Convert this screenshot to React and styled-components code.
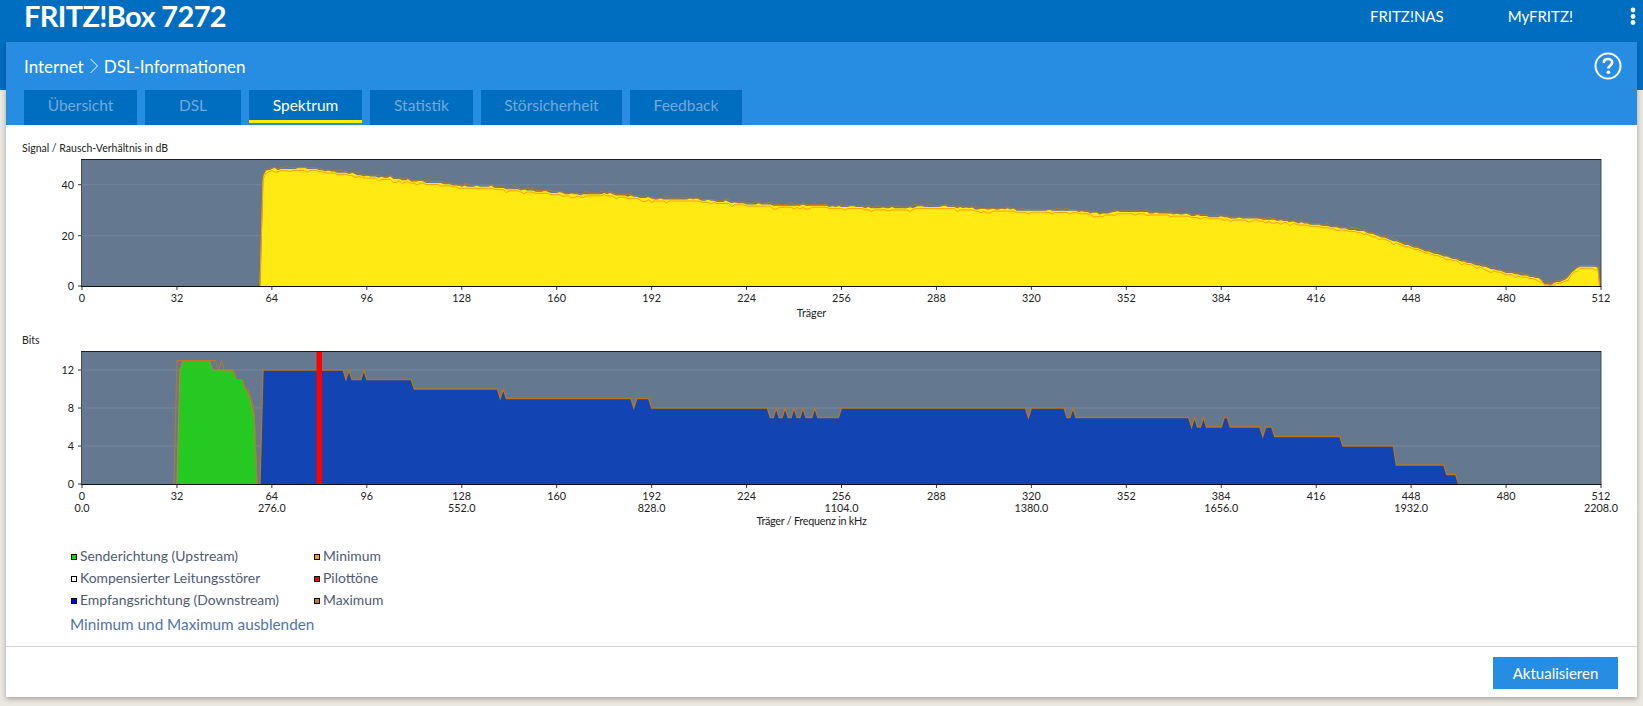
import React from "react";
import styled, { createGlobalStyle } from "styled-components";

const FONT = `Lato, "Liberation Sans", sans-serif`;
const X0 = 82;
const PW = 1519;
const cx = (c) => X0 + (c * PW) / 512;

const Global = createGlobalStyle`
  html, body { margin: 0; padding: 0; background: #ebe8e1; overflow: hidden; }
  body { font-family: ${FONT}; }
`;

const Page = styled.div`
  width: 1643px;
  height: 706px;
  background: linear-gradient(#006ec0 90px, #ebe8e1 90px);
  display: flex;
  flex-direction: column;
`;
const TopBar = styled.header`
  height: 42px;
  flex: none;
  display: flex;
  align-items: flex-start;
  padding-left: 24px;
  color: #fff;
`;
const Brand = styled.div`
  font-size: 29px;
  font-weight: 700;
  line-height: 32px;
  letter-spacing: -0.65px;
  flex: 1;
`;
const TopLink = styled.a`
  font-size: 15px;
  line-height: 33px;
  margin-left: ${(p) => p.$gap}px;
  color: #fff;
`;
const Dots = styled.svg`
  width: 6px;
  height: 20px;
  margin: 7px 7px 0 57px;
`;
const Panel = styled.main`
  margin: 0 6px;
  height: 655px;
  background: #fff;
  box-shadow: 0 2px 5px rgba(0, 0, 0, 0.3);
  display: flex;
  flex-direction: column;
`;
const PanelHead = styled.div`
  height: 83px;
  flex: none;
  background: #278de2;
  display: flex;
  flex-direction: column;
  justify-content: space-between;
  padding: 0 0 0 18px;
`;
const CrumbRow = styled.div`
  display: flex;
  align-items: center;
  justify-content: space-between;
  height: 48px;
  color: #fff;
  padding-right: 15px;
`;
const Crumb = styled.div`
  display: flex;
  align-items: center;
  font-size: 17px;
  gap: 5px;
`;
const Tabs = styled.nav`
  display: flex;
  gap: 8px;
  height: 35px;
`;
const Tab = styled.a`
  width: ${(p) => p.$w}px;
  box-sizing: border-box;
  background: #006ec0;
  color: ${(p) => (p.$active ? "#fff" : "#74a9d8")};
  font-size: 15.5px;
  line-height: 31px;
  text-align: center;
  border-bottom: 5px solid #006ec0;
  ${(p) => p.$active && "box-shadow: inset 0 -3px 0 #ffed00; height: 33px; border-bottom: 0; margin-bottom: 2px;"}
`;
const Content = styled.div`
  flex: 1;
  display: flex;
  flex-direction: column;
  padding-top: 16px;
`;
const ChartTitle = styled.div`
  font-size: 10.5px;
  line-height: 14px;
  color: #222;
  padding-left: 16px;
`;
const ChartSvg = styled.svg`
  display: block;
  width: 1631px;
  flex: none;
  font-family: ${FONT};
  font-size: 10.8px;
  fill: #222;
`;
const AxisTitle = styled.text`
  letter-spacing: ${(p) => p.$ls || 0}px;
`;
const Legend = styled.div`
  display: grid;
  grid-template-columns: 243px auto;
  justify-content: start;
  padding: 17px 0 0 65px;
  font-size: 13.9px;
  line-height: 22px;
  color: #4e5b75;
`;
const LegendItem = styled.div`
  display: flex;
  align-items: center;
  gap: 3px;
`;
const Swatch = styled.span`
  width: 4px;
  height: 4px;
  margin-top: 2px;
  border: 1px solid #000;
  background: ${(p) => p.$c};
`;
const ToggleLink = styled.a`
  display: block;
  margin: 2px 0 0 64px;
  font-size: 15.3px;
  line-height: 22px;
  color: #4f74ac;
`;
const Footer = styled.div`
  margin-top: auto;
  height: 51px;
  box-sizing: border-box;
  border-top: 1px solid #d4d4d4;
  display: flex;
  justify-content: flex-end;
  align-items: flex-start;
  padding: 10px 19px 0 0;
`;
const Button = styled.button`
  width: 125px;
  height: 32px;
  border: 0;
  padding: 0;
  background: #278de2;
  color: #fff;
  font-family: ${FONT};
  font-size: 15px;
`;

/* ---------- data ---------- */
const SNR_KEYS = [
  [61, 177], [62, 172], [64, 168.5], [66, 170], [68, 169], [70, 170], [72, 168.5], [78, 168.5], [82, 171], [90, 173.5],
  [96, 176.5], [104, 178], [112, 181.5], [120, 183], [128, 186.5], [136, 186.5], [144, 189], [152, 191], [160, 193],
  [168, 195], [176, 193.5], [184, 196.5], [192, 199], [208, 200], [224, 204], [240, 206], [256, 206.5], [272, 209],
  [288, 206.5], [304, 209.5], [320, 210.5], [336, 211.5], [343, 214], [352, 211.5], [368, 214], [384, 217.5], [400, 219.5],
  [416, 225], [432, 231.5], [448, 246.5], [464, 260.5], [480, 272.5], [489, 277], [491, 278], [493, 284], [495, 285.5], [497, 282],
  [500, 280], [502, 273], [504, 267.5], [508, 266.5], [510, 267], [511, 268],
];
function rnd(i) {
  const s = Math.sin(i * 127.1 + 3.7) * 43758.5453;
  return s - Math.floor(s);
}
function snrSeries() {
  const top = [], min = [], max = [];
  for (let c = 61; c <= 511; c++) {
    let k = 0;
    while (k < SNR_KEYS.length - 2 && SNR_KEYS[k + 1][0] < c) k++;
    const [c0, y0] = SNR_KEYS[k];
    const [c1, y1] = SNR_KEYS[k + 1];
    const y = y0 + ((y1 - y0) * (c - c0)) / (c1 - c0);
    const step = Math.round(y / 1.27) * 1.27;
    const jitter = c < 420 && rnd(c + 400) > 0.82 ? -1.3 : 0;
    top.push([c, step + jitter]);
    const dip = rnd(c) > 0.84 ? 1.8 : 0;
    const bump = rnd(c + 900) > 0.86 ? 1.6 : 0;
    min.push([c, Math.min(285, step + 1.6 + dip)]);
    max.push([c, step - 1.2 - bump]);
  }
  return { top, min, max };
}
const BIT_Y = (b) => 484 - b * 9.5;
const UP_MIN = [[32, 0], [33, 12], [34, 13], [43, 13], [44, 12], [51, 12], [52, 11], [54, 11], [55, 10], [56, 9.5], [57, 8.5], [58, 7], [59, 0]];
const UP_MAX = [[31, 0], [32, 13], [45, 13], [46, 12], [47, 13], [48, 12], [51, 12], [52, 11], [54, 11], [55, 10], [56, 10], [57, 9], [58, 8], [59, 0]];
const DOWN = [
  [60, 0], [61, 12], [88, 12], [89, 11], [90, 12], [91, 11], [94, 11], [95, 12], [96, 11], [111, 11], [112, 10], [140, 10], [141, 9],
  [142, 10], [143, 9], [185, 9], [186, 8], [187, 9], [191, 9], [192, 8], [231, 8], [232, 7], [233, 7], [234, 8], [235, 7], [236, 7],
  [237, 8], [238, 7], [239, 7], [240, 8], [241, 7], [242, 7], [243, 8], [244, 7], [246, 7], [247, 8], [248, 7], [255, 7], [256, 8],
  [318, 8], [319, 7], [320, 8], [331, 8], [332, 7], [333, 7], [334, 8], [335, 7], [373, 7], [374, 6], [375, 7], [376, 6], [377, 6],
  [378, 7], [379, 6], [384, 6], [385, 7], [386, 7], [387, 6], [397, 6], [398, 5], [399, 6], [401, 6], [402, 5], [424, 5], [425, 4],
  [442, 4], [443, 2], [459, 2], [460, 1], [463, 1], [464, 0],
];
const pts = (arr, fy) => arr.map(([c, v]) => `${cx(c).toFixed(1)},${fy(v).toFixed(1)}`).join(" ");
const idy = (v) => v;

function Axes({ plotTop, plotBottom, yTicks, xLabelsY, freq }) {
  const xs = [];
  for (let c = 0; c <= 512; c += 32) xs.push(c);
  return (
    <>
      {xs.map((c) => (
        <g key={c}>
          <line x1={cx(c)} x2={cx(c)} y1={plotBottom} y2={plotBottom + 4} stroke="#333" />
          <text x={cx(c)} y={xLabelsY} textAnchor="middle">{c}</text>
          {freq && c % 64 === 0 && (
            <text x={cx(c)} y={xLabelsY + 12} textAnchor="middle">{(c * 4.3125).toFixed(1)}</text>
          )}
        </g>
      ))}
      {yTicks.map(([label, y]) => (
        <g key={label}>
          <line x1={78} x2={82} y1={y} y2={y} stroke="#333" />
          <text x={74} y={y + 4} textAnchor="end">{label}</text>
        </g>
      ))}
      <rect x={81.5} y={plotTop - 0.5} width={PW + 0.5} height={plotBottom - plotTop + 1} fill="none" stroke="#4a4f55" />
      <line x1={81} x2={X0 + PW} y1={plotTop - 0.5} y2={plotTop - 0.5} stroke="#1c2126" />
      <line x1={81} x2={X0 + PW} y1={plotBottom + 0.5} y2={plotBottom + 0.5} stroke="#111" />
    </>
  );
}

/* SVG coordinates are page pixels, shifted by viewBox so the chart sits in flow. */
function SnrChart() {
  const { top, min, max } = snrSeries();
  const grid = [[40, 184.7], [20, 235.7]];
  return (
    <ChartSvg height="178" viewBox="6 155 1631 178">
      <rect x={X0} y={159} width={PW} height={127} fill="#64798f" />
      {grid.map(([l, y]) => <line key={l} x1={X0} x2={X0 + PW} y1={y} y2={y} stroke="#72869b" />)}
      <polygon points={`${cx(60)},286 ${pts(top, idy)} ${cx(511.5)},286`} fill="#ffea14" />
      <polyline points={`${cx(60)},285.5 ${pts(max, idy)} ${cx(511.5)},285.5`} fill="none" stroke="#b8792a" strokeWidth="1" />
      <polyline points={`${cx(60)},285.5 ${pts(min, idy)} ${cx(511.5)},285.5`} fill="none" stroke="#ff9d12" strokeWidth="1" />
      <Axes plotTop={160} plotBottom={286} yTicks={[["40", 184.7], ["20", 235.7], ["0", 286]]} xLabelsY={302} />
      <AxisTitle x={811.5} y={317} textAnchor="middle">Träger</AxisTitle>
    </ChartSvg>
  );
}

function BitsChart() {
  const grid = [12, 8, 4];
  return (
    <ChartSvg height="181" viewBox="6 347 1631 181">
      <rect x={X0} y={351} width={PW} height={133} fill="#64798f" />
      {grid.map((b) => <line key={b} x1={X0} x2={X0 + PW} y1={BIT_Y(b)} y2={BIT_Y(b)} stroke="#72869b" />)}
      <polygon points={pts(UP_MIN, BIT_Y)} fill="#26c922" />
      <polygon points={pts(DOWN, BIT_Y)} fill="#1244b4" />
      <polyline points={pts(UP_MIN, BIT_Y)} fill="none" stroke="#c08a20" strokeWidth="1" />
      <polyline points={pts(UP_MAX, BIT_Y)} fill="none" stroke="#b8792a" strokeWidth="1" />
      <polyline points={pts(DOWN, BIT_Y)} fill="none" stroke="#b8761f" strokeWidth="1.3" />
      <rect x={316.5} y={351} width={5.5} height={133} fill="#ff0000" />
      <Axes plotTop={352} plotBottom={484} yTicks={[["12", BIT_Y(12)], ["8", BIT_Y(8)], ["4", BIT_Y(4)], ["0", 484]]} xLabelsY={500} freq />
      <AxisTitle $ls={-0.25} x={811.5} y={525} textAnchor="middle">Träger / Frequenz in kHz</AxisTitle>
    </ChartSvg>
  );
}

const TABS = [["Übersicht", 113], ["DSL", 96], ["Spektrum", 113, true], ["Statistik", 103], ["Störsicherheit", 141], ["Feedback", 112]];
const LEGEND = [
  ["#00e000", "Senderichtung (Upstream)"], ["#ff9d12", "Minimum"],
  ["#ffffff", "Kompensierter Leitungsstörer"], ["#ff0000", "Pilottöne"],
  ["#0000ff", "Empfangsrichtung (Downstream)"], ["#c07a20", "Maximum"],
];

export default function App() {
  return (
    <Page>
      <Global />
      <TopBar>
        <Brand>FRITZ!Box 7272</Brand>
        <TopLink $gap={0}>FRITZ!NAS</TopLink>
        <TopLink $gap={64}>MyFRITZ!</TopLink>
        <Dots viewBox="0 0 6 20">
          <circle cx="3" cy="3" r="2.4" fill="#fff" />
          <circle cx="3" cy="9.5" r="2.4" fill="#fff" />
          <circle cx="3" cy="15.5" r="2.4" fill="#fff" />
        </Dots>
      </TopBar>
      <Panel>
        <PanelHead>
          <CrumbRow>
            <Crumb>
              Internet
              <svg width="10" height="18" viewBox="0 0 10 18"><path d="M1.5 2 L8.5 9 L1.5 16" fill="none" stroke="#fff" strokeWidth="1" /></svg>
              DSL-Informationen
            </Crumb>
            <svg width="28" height="28" viewBox="0 0 28 28">
              <circle cx="14" cy="14" r="12.5" fill="none" stroke="#fff" strokeWidth="2" />
              <path d="M9.8 11 C9.8 8.4 11.7 7 14 7 C16.4 7 18.2 8.5 18.2 10.6 C18.2 13.4 14.4 13.6 14.4 16.6" fill="none" stroke="#fff" strokeWidth="2.6" />
              <circle cx="14.4" cy="20.2" r="1.8" fill="#fff" />
            </svg>
          </CrumbRow>
          <Tabs>
            {TABS.map(([t, w, a]) => <Tab key={t} $w={w} $active={a}>{t}</Tab>)}
          </Tabs>
        </PanelHead>
        <Content>
          <ChartTitle>Signal / Rausch-Verhältnis in dB</ChartTitle>
          <SnrChart />
          <ChartTitle>Bits</ChartTitle>
          <BitsChart />
          <Legend>
            {LEGEND.map(([c, t]) => (
              <LegendItem key={t}><Swatch $c={c} />{t}</LegendItem>
            ))}
          </Legend>
          <ToggleLink>Minimum und Maximum ausblenden</ToggleLink>
          <Footer><Button>Aktualisieren</Button></Footer>
        </Content>
      </Panel>
    </Page>
  );
}
